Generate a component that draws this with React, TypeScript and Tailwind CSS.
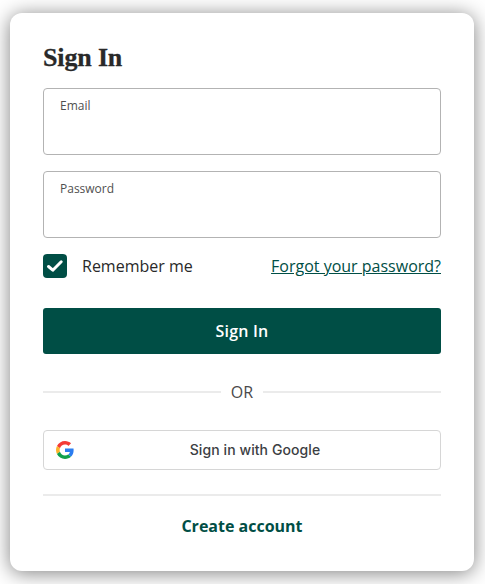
function GoogleLogo() {
  return (
    <svg viewBox="0 0 48 48" className="size-[18px] shrink-0" aria-hidden="true">
      <path fill="#F43B37" d="M24 9.5c3.54 0 6.71 1.22 9.21 3.6l6.85-6.85C35.9 2.38 30.47 0 24 0 14.62 0 6.51 5.38 2.56 13.22l7.98 6.19C12.43 13.72 17.74 9.5 24 9.5z" />
      <path fill="#2B7DF0" d="M46.98 24.55c0-1.57-.15-3.09-.38-4.55H24v9.02h12.94c-.58 2.96-2.26 5.48-4.78 7.18l7.73 6c4.51-4.18 7.09-10.36 7.09-17.65z" />
      <path fill="#FCB32B" d="M10.53 28.59c-.48-1.45-.76-2.99-.76-4.59s.27-3.14.76-4.59l-7.98-6.19C.92 16.46 0 20.12 0 24c0 3.88.92 7.54 2.56 10.78l7.97-6.19z" />
      <path fill="#10A14C" d="M24 48c6.48 0 11.93-2.13 15.89-5.81l-7.73-6c-2.15 1.45-4.92 2.3-8.16 2.3-6.26 0-11.57-4.22-13.47-9.91l-7.98 6.19C6.51 42.62 14.62 48 24 48z" />
    </svg>
  );
}

function Field({ label }: { label: string }) {
  return (
    <label className="block h-[67px] rounded-[4px] border border-[#b3b3b3] px-4 pt-2 text-xs leading-[18px] text-[#4f4f4f]">
      {label}
    </label>
  );
}

export default function App() {
  return (
    <div className="h-[584px] w-[485px] overflow-hidden bg-white pl-[10px] pt-[13px] font-['Open_Sans','Noto_Sans',sans-serif]">
      <main className="flex h-[558px] w-[464px] flex-col rounded-[12px] bg-white px-[33px] pt-[28px] shadow-[0_2px_20px_rgba(0,0,0,0.5)]">
        <h1 className="h-[34px] whitespace-nowrap font-['Liberation_Serif',serif] text-[26px] font-bold leading-[34px] tracking-[-0.15px] text-[#292929] [-webkit-text-stroke:0.3px_#292929]">
          Sign In
        </h1>
        <div className="mt-[13px] flex flex-col gap-4">
          <Field label="Email" />
          <Field label="Password" />
        </div>
        <div className="mt-4 flex h-6 items-center">
          <span className="flex size-6 items-center justify-center rounded-[4px] bg-[#004e45]">
            <svg viewBox="0 0 24 24" className="size-6" fill="none" stroke="white" strokeWidth="3" strokeLinecap="round" strokeLinejoin="round">
              <path d="M5.5 12.5 9.8 16.2 18.2 7.8" />
            </svg>
          </span>
          <span className="ml-[15px] text-base text-[#292929]">Remember me</span>
          <a className="ml-auto text-base text-[#004e45] underline">Forgot your password?</a>
        </div>
        <button className="mt-[30px] h-[46px] w-full rounded-[3px] bg-[#004e45] text-base font-semibold tracking-[0.2px] text-white">
          Sign In
        </button>
        <div className="mt-[26px] flex h-6 items-center gap-[10px] text-base text-[#4a4a4a]">
          <span className="h-[2px] flex-1 bg-[#ebebeb]" />
          <span>OR</span>
          <span className="h-[2px] flex-1 bg-[#ebebeb]" />
        </div>
        <button className="mt-[26px] flex h-10 w-full items-center rounded-[4px] border border-[#d6d6d6] px-3">
          <GoogleLogo />
          <span className="flex-1 pl-2 text-center font-['Inter',sans-serif] text-sm font-medium tracking-[0.08px] text-[#3c4043]">
            Sign in with Google
          </span>
        </button>
        <div className="mt-6 h-[2px] bg-[#ebebeb]" />
        <a className="mt-[18px] text-center text-base font-bold leading-6 text-[#004e45]">Create account</a>
      </main>
    </div>
  );
}
